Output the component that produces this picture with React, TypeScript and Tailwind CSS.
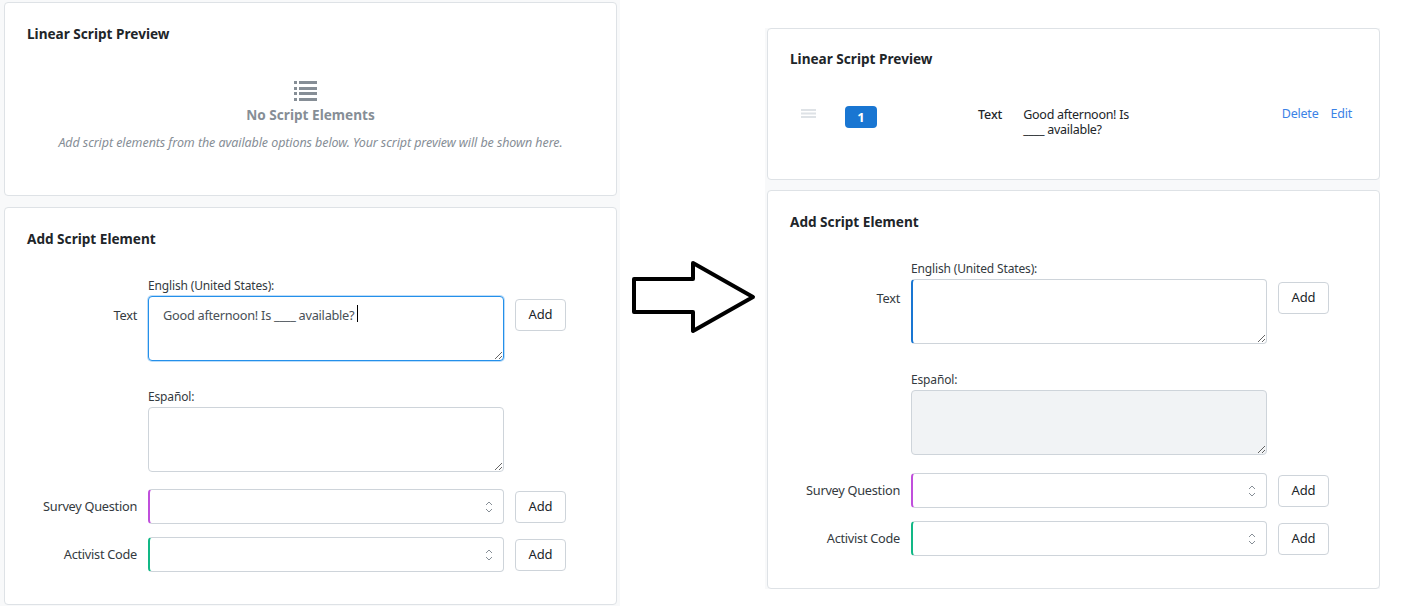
const font = { fontFamily: '"Noto Sans", sans-serif' };

function Chevrons() {
  return (
    <svg
      width="8"
      height="14"
      viewBox="0 0 8 14"
      fill="none"
      stroke="#868e96"
      strokeWidth="1"
      className="pointer-events-none absolute right-[10px] top-1/2 -translate-y-1/2"
    >
      <path d="M1 5l3-3 3 3" />
      <path d="M1 9l3 3 3-3" />
    </svg>
  );
}

function AddButton() {
  return (
    <button className="h-[32px] w-[51px] rounded border border-[#ced4da] bg-white text-[13px] tracking-[-0.1px] text-[#212529]">
      Add
    </button>
  );
}

function SelectRow({ label, accent }: { label: string; accent: string }) {
  return (
    <div className="flex items-center">
      <div className="w-[110px] text-right text-[12.75px] tracking-[-0.27px] text-[#343a40]">{label}</div>
      <div className={`relative ml-[11px] h-[35px] w-[356px] rounded border border-l-2 border-[#ced4da] bg-white ${accent}`}>
        <Chevrons />
      </div>
      <div className="ml-[11px]">
        <AddButton />
      </div>
    </div>
  );
}

function AddElementForm({ typed, disabledSpanish }: { typed: boolean; disabledSpanish: boolean }) {
  return (
    <section className={`rounded border border-[#dee2e6] bg-white px-[22px] pt-[22px] ${typed ? 'mt-[11px]' : 'mt-[10px]'}`}>
      <h2 className="text-[13.6px] font-bold leading-[18px] text-[#212529]">Add Script Element</h2>

      <div className="mt-[30px] ml-[121px] text-[12px] leading-[16px] tracking-[-0.15px] text-[#343a40]">English (United States):</div>
      <div className="mt-[2px] flex">
        <div className="mt-[10px] w-[110px] text-right text-[12.75px] leading-[18px] tracking-[-0.27px] text-[#343a40]">Text</div>
        <div className="relative ml-[11px] w-[356px]">
          <textarea
            readOnly
            value={typed ? 'Good afternoon! Is ____ available?' : ''}
            className={`block h-[65px] w-full rounded border bg-white px-[14px] py-[9px] text-[12.75px] leading-[18px] tracking-[-0.27px] text-[#495057] outline-none ${
              typed ? 'border-[#2490ea] ring-1 ring-[#2490ea]/30' : 'border-[#ced4da] border-l-2 border-l-[#1976d2]'
            }`}
            style={font}
          />
          {typed && <div className="absolute left-[209px] top-[9px] h-[17px] w-px bg-black" />}
        </div>
        <div className="ml-[11px] mt-[3px]">
          <AddButton />
        </div>
      </div>

      <div className="mt-[28px] ml-[121px] text-[12px] leading-[16px] tracking-[-0.15px] text-[#343a40]">Español:</div>
      <textarea
        readOnly
        disabled={disabledSpanish}
        className={`mt-[2px] ml-[121px] block h-[65px] w-[356px] rounded border border-[#ced4da] outline-none ${
          disabledSpanish ? 'bg-[#f1f3f5]' : 'bg-white'
        }`}
      />

      <div className={`flex flex-col gap-[13px] pb-[32px] ${typed ? 'mt-[17px]' : 'mt-[18px]'}`}>
        <SelectRow label="Survey Question" accent="border-l-[#c04fdc]" />
        <SelectRow label="Activist Code" accent="border-l-[#12b886]" />
      </div>
    </section>
  );
}

function Arrow() {
  return (
    <svg width="126" height="74" viewBox="0 0 126 74" fill="none" stroke="#000" strokeWidth="4" strokeLinejoin="round" className="ml-[11px] mt-[260px]">
      <path d="M3 19h59V3l60 34-60 34V52H3z" />
    </svg>
  );
}

export default function App() {
  return (
    <div className="flex h-[611px] w-[1406px] bg-white" style={font}>
      {/* before */}
      <div className="h-[606px] w-[620px] bg-[#f8f9fa] pl-[4px] pt-[2px]">
        <div className="w-[613px]">
          <section className="h-[194px] rounded border border-[#dee2e6] bg-white px-[22px] pt-[22px]">
            <h2 className="text-[13.6px] font-bold leading-[18px] text-[#212529]">Linear Script Preview</h2>
            <div className="mt-[38px] flex flex-col items-center text-[#868e96]">
              <svg width="23" height="20" viewBox="0 0 23 20" fill="currentColor" className="-translate-x-[5px]">
                <rect x="0" y="0" width="3" height="3" />
                <rect x="5" y="0" width="18" height="3" />
                <rect x="0" y="6" width="3" height="3" />
                <rect x="5" y="6" width="18" height="3" />
                <rect x="0" y="11" width="3" height="3" />
                <rect x="5" y="11" width="18" height="3" />
                <rect x="0" y="17" width="3" height="3" />
                <rect x="5" y="17" width="18" height="3" />
              </svg>
              <div className="mt-[4px] text-[13.6px] font-bold leading-[20px]">No Script Elements</div>
              <p className="mt-[9px] text-[12.5px] italic leading-[18px] tracking-[-0.08px]">
                Add script elements from the available options below. Your script preview will be shown here.
              </p>
            </div>
          </section>
          <AddElementForm typed disabledSpanish={false} />
        </div>
      </div>

      <div className="w-[145px]">
        <Arrow />
      </div>

      {/* after */}
      <div className="mt-[28px] h-[561px] w-[615px] bg-[#f8f9fa] pl-[2px]">
        <div className="w-[613px]">
          <section className="h-[152px] rounded border border-[#dee2e6] bg-white px-[22px] pt-[21px]">
            <h2 className="text-[13.6px] font-bold leading-[18px] text-[#212529]">Linear Script Preview</h2>
            <div className="mt-[39px] flex items-start text-[12.5px] leading-[15px] text-[#212529]">
              <svg width="15" height="9" viewBox="0 0 15 9" fill="#dee2e6" className="ml-[11px] mt-[2px]">
                <rect y="0" width="15" height="2" />
                <rect y="3.500" width="15" height="2" />
                <rect y="7" width="15" height="2" />
              </svg>
              <span className="ml-[29px] mt-[-1px] flex h-[22px] w-[32px] items-center justify-center rounded bg-[#1976d2] text-[13px] font-bold text-white">
                1
              </span>
              <span className="ml-[101px] font-medium tracking-[-0.1px]">Text</span>
              <span className="ml-[21px] w-[115px] tracking-[-0.28px]">Good afternoon! Is ____ available?</span>
              <span className="ml-auto flex gap-[12px] pr-[5px] -translate-y-px tracking-[-0.22px] text-[#3b82e6]">
                <span>Delete</span>
                <span>Edit</span>
              </span>
            </div>
          </section>
          <AddElementForm typed={false} disabledSpanish />
        </div>
      </div>
    </div>
  );
}
